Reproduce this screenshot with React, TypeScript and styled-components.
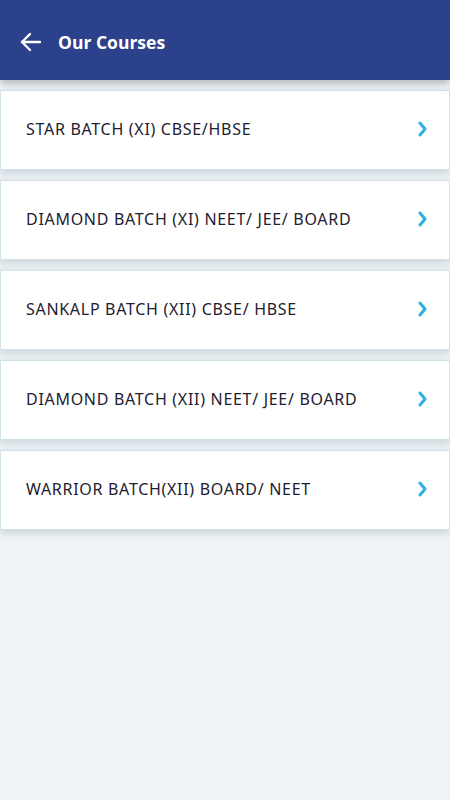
import React, { FC } from 'react'
import styled, { createGlobalStyle } from 'styled-components'

const GlobalStyle = createGlobalStyle`
  html, body {
    margin: 0;
    padding: 0;
    background: #eef4f7;
    font-family: "Open Sans", "Noto Sans", sans-serif;
  }
`

const Page = styled.div`
  min-height: 800px;
  background: #eef4f7;
`

const Header = styled.header`
  height: 80px;
  box-sizing: border-box;
  padding: 4px 0 0 20px;
  background: #2c418c;
  display: flex;
  align-items: center;
  gap: 16px;
  box-shadow: 0 3px 8px rgba(0, 0, 0, 0.28);
  position: relative;
  z-index: 1;
`

const BackButton = styled.button`
  border: none;
  background: none;
  padding: 0;
  display: flex;
  cursor: pointer;
`

const Title = styled.h1`
  margin: 0;
  color: #ffffff;
  font-size: 17.5px;
  font-weight: 700;
`

const List = styled.div`
  display: flex;
  flex-direction: column;
  gap: 10px;
  padding-top: 10px;
`

const Card = styled.a`
  height: 80px;
  box-sizing: border-box;
  display: flex;
  align-items: center;
  justify-content: space-between;
  padding: 0 22px 0 25px;
  background: #ffffff;
  border: 1px solid #d2e2e9;
  box-shadow: 0 3px 8px rgba(90, 110, 120, 0.24);
  text-decoration: none;
  cursor: pointer;
`

const CardLabel = styled.span`
  color: #1e2030;
  font-family: "Noto Sans", "Open Sans", sans-serif;
  font-size: 16px;
  letter-spacing: 0.7px;
  margin-top: -3px;
`

const Chevron = styled.svg`
  margin-top: -3px;
`

const courses = [
  'STAR BATCH (XI) CBSE/HBSE',
  'DIAMOND BATCH (XI) NEET/ JEE/ BOARD',
  'SANKALP BATCH (XII) CBSE/ HBSE',
  'DIAMOND BATCH (XII) NEET/ JEE/ BOARD',
  'WARRIOR BATCH(XII) BOARD/ NEET',
]

const App: FC = () => {
  return (
    <Page>
      <GlobalStyle />
      <Header>
        <BackButton aria-label="Back">
          <svg width="22" height="22" viewBox="0 0 22 22" fill="none" stroke="#ffffff" strokeWidth="2.4" strokeLinecap="round" strokeLinejoin="round">
            <path d="M20 11H2" />
            <path d="M10 3L2 11l8 8" />
          </svg>
        </BackButton>
        <Title>Our Courses</Title>
      </Header>
      <List>
        {courses.map((c) => (
          <Card key={c}>
            <CardLabel>{c}</CardLabel>
            <Chevron width="10" height="16" viewBox="0 0 10 16" fill="none" stroke="#2cb1e1" strokeWidth="3" strokeLinecap="round" strokeLinejoin="round">
              <path d="M3 2l5 6-5 6" />
            </Chevron>
          </Card>
        ))}
      </List>
    </Page>
  )
}

export default App
